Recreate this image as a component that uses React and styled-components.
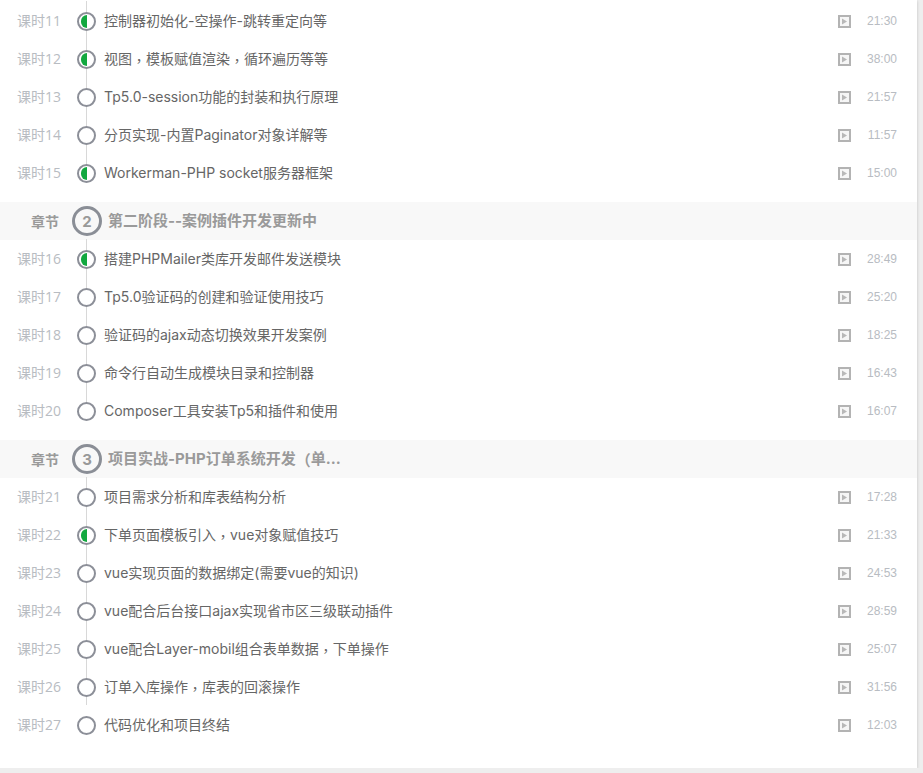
import React from 'react'
import styled, { createGlobalStyle } from 'styled-components'

const GlobalStyle = createGlobalStyle`
  html, body {
    margin: 0;
    padding: 0;
    background: #eeeeee;
  }
`

const Card = styled.div`
  width: 917px;
  height: 768px;
  box-sizing: border-box;
  padding-top: 1px;
  background: #fff;
  box-shadow: 0 1px 3px rgba(0, 0, 0, 0.2);
  overflow: hidden;
  font-family: "Inter", "Noto Sans CJK SC", sans-serif;
`

const Group = styled.div`
  margin-bottom: 11px;
`

const Chapter = styled.div`
  display: flex;
  align-items: center;
  height: 38px;
  margin-bottom: -1px;
  background: #f8f8f8;
`

const ChapterLabel = styled.span`
  width: 59px;
  text-align: right;
  font-size: 14px;
  font-weight: 700;
  color: #9a9a9a;
`

const ChapterNum = styled.span`
  width: 30px;
  height: 30px;
  box-sizing: border-box;
  margin-left: 13px;
  border: 3px solid #8a8e96;
  border-radius: 50%;
  display: flex;
  align-items: center;
  justify-content: center;
  font-size: 15px;
  font-weight: 700;
  color: #999;
`

const ChapterTitle = styled.span`
  margin-left: 6px;
  font-size: 15px;
  line-height: 20px;
  font-weight: 700;
  color: #9a9a9a;
`

const Row = styled.div`
  position: relative;
  display: flex;
  align-items: center;
  height: 38px;
`

const Line = styled.span`
  position: absolute;
  left: 86px;
  width: 1px;
  top: ${({ $first }) => ($first ? '0' : '-19px')};
  height: ${({ $last }) => ($last ? '19px' : '38px')};
  background: #d8d8d8;
`

const Lesson = styled.span`
  width: 61px;
  box-sizing: border-box;
  padding-left: 17px;
  font-family: "Open Sans", "Noto Sans CJK SC", sans-serif;
  font-size: 14px;
  color: #b8bcc2;
`

const Dot = styled.span`
  position: relative;
  z-index: 1;
  width: 19px;
  height: 19px;
  box-sizing: border-box;
  margin: 2px 0 0 16px;
  border: 2px solid #8c8f98;
  border-radius: 50%;
  background: #fff;
  padding: 1px 2px;
  flex: none;
`

const Half = styled.span`
  display: block;
  width: 6px;
  height: 13px;
  background: #12a83f;
  border-radius: 6.5px 0 0 6.5px;
`

const Title = styled.span`
  flex: 1;
  margin: 2px 0 0 8px;
  font-size: 14px;
  line-height: 20px;
  color: #666;
`

// fallback font for the full-width marks, nudged down to where the reference has them
const Punct = styled.span`
  font-family: "Noto Sans CJK TC", sans-serif;
  line-height: 1;
  vertical-align: -2px;
`

const PlayBox = styled.svg`
  width: 13px;
  height: 13px;
  flex: none;
  margin-top: 2px;
`

const Time = styled.span`
  width: 66px;
  padding: 1px 20px 0 0;
  box-sizing: border-box;
  text-align: right;
  font-family: "Liberation Sans", Arial, sans-serif;
  font-size: 12px;
  color: #b8bcc2;
`

const groups = [
  {
    rows: [
      ['11', '控制器初始化-空操作-跳转重定向等', '21:30', true],
      ['12', '视图，模板赋值渲染，循环遍历等等', '38:00', true],
      ['13', 'Tp5.0-session功能的封装和执行原理', '21:57', false],
      ['14', '分页实现-内置Paginator对象详解等', '11:57', false],
      ['15', 'Workerman-PHP socket服务器框架', '15:00', true],
    ],
  },
  {
    num: 2,
    title: '第二阶段--案例插件开发更新中',
    rows: [
      ['16', '搭建PHPMailer类库开发邮件发送模块', '28:49', true],
      ['17', 'Tp5.0验证码的创建和验证使用技巧', '25:20', false],
      ['18', '验证码的ajax动态切换效果开发案例', '18:25', false],
      ['19', '命令行自动生成模块目录和控制器', '16:43', false],
      ['20', 'Composer工具安装Tp5和插件和使用', '16:07', false],
    ],
  },
  {
    num: 3,
    title: '项目实战-PHP订单系统开发（单...',
    rows: [
      ['21', '项目需求分析和库表结构分析', '17:28', false],
      ['22', '下单页面模板引入，vue对象赋值技巧', '21:33', true],
      ['23', 'vue实现页面的数据绑定(需要vue的知识)', '24:53', false],
      ['24', 'vue配合后台接口ajax实现省市区三级联动插件', '28:59', false],
      ['25', 'vue配合Layer-mobil组合表单数据，下单操作', '25:07', false],
      ['26', '订单入库操作，库表的回滚操作', '31:56', false],
      ['27', '代码优化和项目终结', '12:03', false],
    ],
  },
]

const withPunct = (text) =>
  text.split(/([，（])/).map((part, i) => (i % 2 ? <Punct key={i}>{part}</Punct> : part))

const PlayIcon = () => (
  <PlayBox viewBox="0 0 13 13">
    <rect x="1" y="1" width="11" height="11" fill="#f6f6f6" stroke="#b3b3b3" strokeWidth="2" />
    <path d="M4 3.5 L9 6.5 L4 9.5 Z" fill="#b8b8b8" />
  </PlayBox>
)

const App = () => {
  return (
    <>
      <GlobalStyle />
      <Card>
        {groups.map((group, g) => (
          <Group key={g}>
            {group.num && (
              <Chapter>
                <ChapterLabel>章节</ChapterLabel>
                <ChapterNum>{group.num}</ChapterNum>
                <ChapterTitle>{withPunct(group.title)}</ChapterTitle>
              </Chapter>
            )}
            {group.rows.map(([no, title, time, started], i) => (
              <Row key={no}>
                <Line $first={i === 0} $last={no === '27'} />
                <Lesson>课时{no}</Lesson>
                <Dot>{started && <Half />}</Dot>
                <Title>{withPunct(title)}</Title>
                <PlayIcon />
                <Time>{time}</Time>
              </Row>
            ))}
          </Group>
        ))}
      </Card>
    </>
  )
}

export default App
